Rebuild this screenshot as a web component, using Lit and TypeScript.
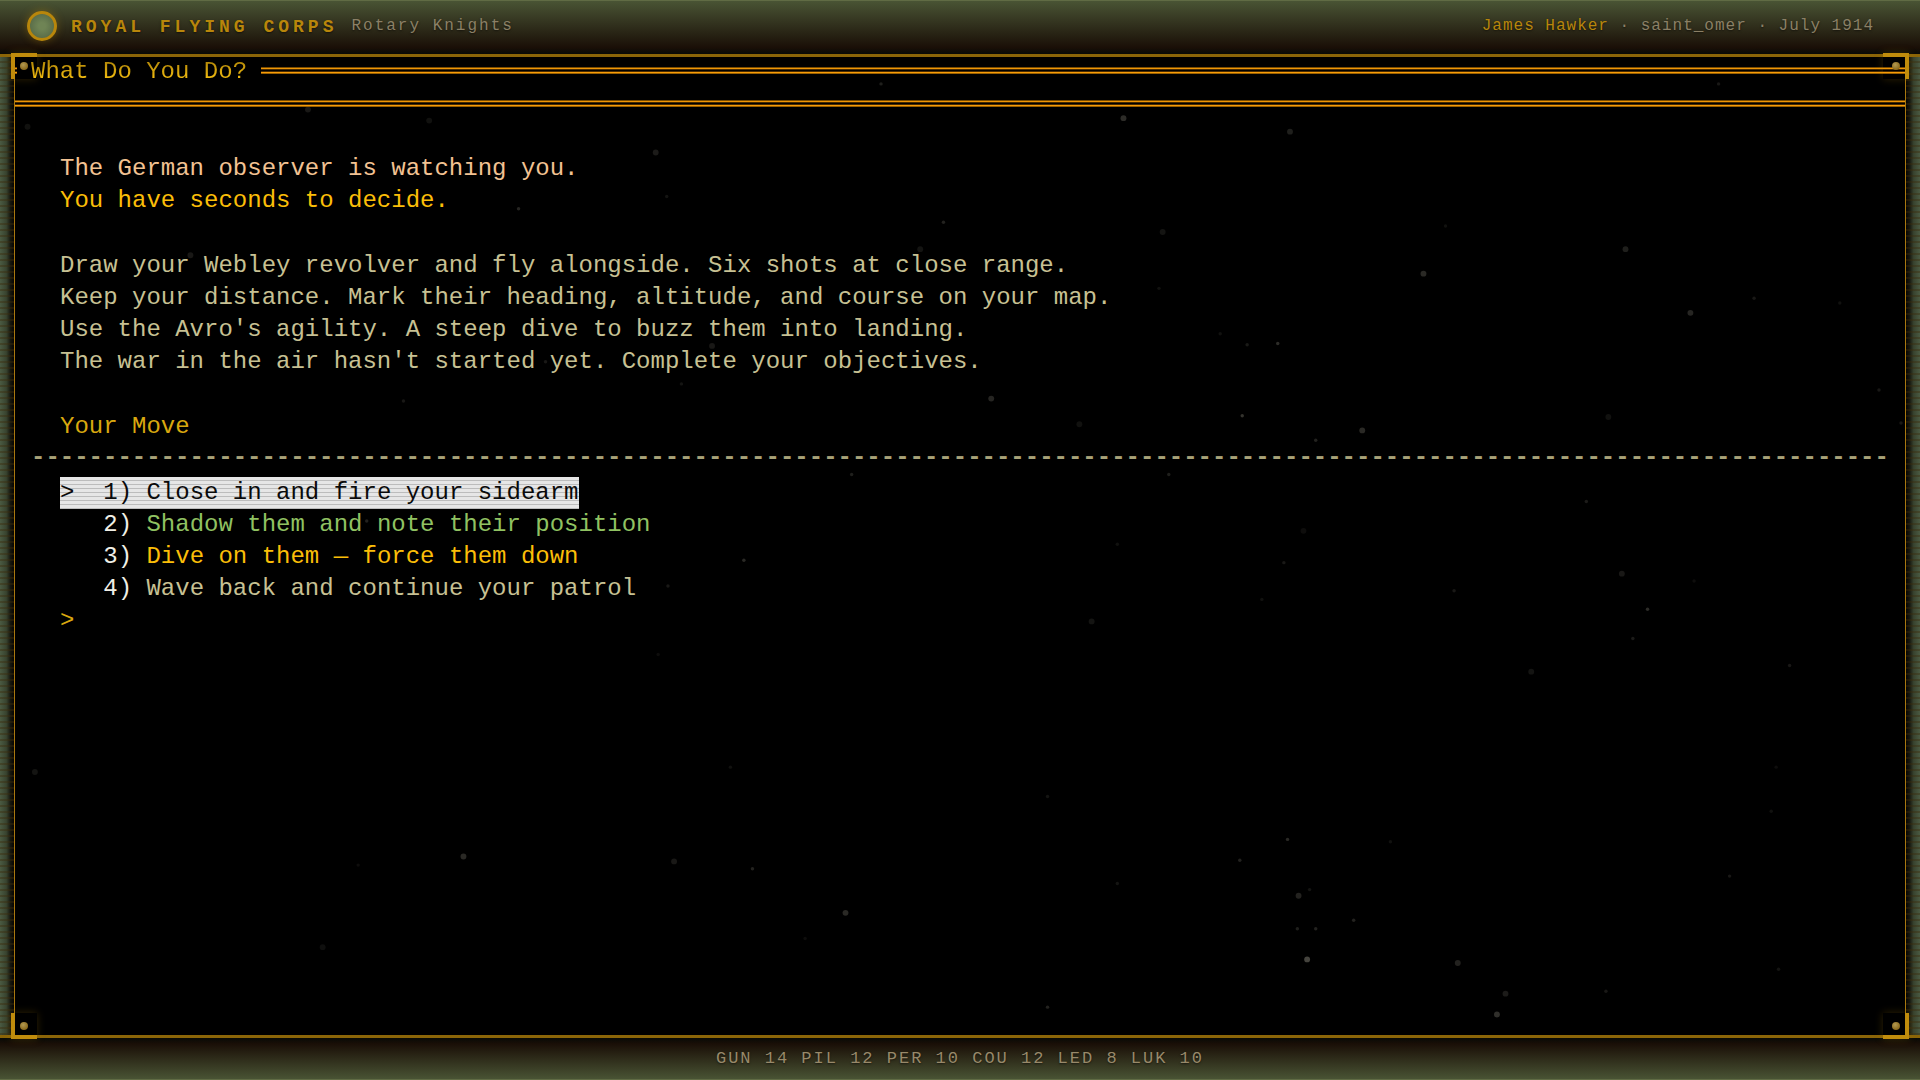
import { LitElement, html, css, svg } from "lit";
import { customElement, state } from "lit/decorators.js";
import { classMap } from "lit/directives/class-map.js";

interface Choice {
  label: string;
  tone: string;
}

const CHOICES: Choice[] = [
  { label: "Close in and fire your sidearm", tone: "plain" },
  { label: "Shadow them and note their position", tone: "safe" },
  { label: "Dive on them — force them down", tone: "gold" },
  { label: "Wave back and continue your patrol", tone: "plain" },
];

const STATS: [string, number][] = [
  ["GUN", 14],
  ["PIL", 12],
  ["PER", 10],
  ["COU", 12],
  ["LED", 8],
  ["LUK", 10],
];

// Dust motes: x, y, radius, opacity in a 1568 by 882 field.
const MOTES: [number, number, number, number][] = [
  [917, 96, 2, 0.26], [1053, 107, 2, 0.18], [1327, 203, 2, 0.18], [1162, 223, 2, 0.24],
  [1380, 255, 2, 0.22], [949, 189, 2, 0.12], [770, 181, 1, 0.2], [751, 203, 2, 0.12],
  [1043, 280, 1, 0.26], [1018, 281, 1, 0.15], [1014, 339, 1, 0.3], [1112, 351, 2, 0.24],
  [1074, 359, 1, 0.2], [809, 325, 2, 0.22], [881, 346, 2, 0.1], [535, 124, 2, 0.16],
  [423, 170, 1, 0.22], [544, 160, 1, 0.12], [350, 98, 2, 0.1], [251, 89, 2, 0.14],
  [22, 103, 2, 0.1], [155, 208, 2, 0.14], [329, 327, 1, 0.14], [719, 68, 1, 0.18],
  [1180, 184, 1, 0.1], [1432, 243, 1, 0.14], [1502, 247, 1, 0.1], [1534, 318, 1, 0.14],
  [1313, 340, 2, 0.1], [1552, 345, 1, 0.14], [1295, 409, 1, 0.16], [1064, 433, 2, 0.08],
  [1048, 459, 1, 0.14], [1324, 468, 2, 0.14], [1345, 497, 1, 0.26], [1333, 521, 1, 0.16],
  [1250, 548, 2, 0.12], [1187, 482, 1, 0.14], [1461, 543, 1, 0.14], [1030, 489, 1, 0.1],
  [891, 507, 2, 0.12], [607, 457, 1, 0.24], [545, 478, 1, 0.14], [695, 387, 1, 0.18],
  [954, 387, 1, 0.18], [299, 425, 1, 0.2], [28, 630, 2, 0.12], [378, 699, 2, 0.24],
  [550, 703, 2, 0.14], [614, 709, 1, 0.2], [690, 745, 2, 0.24], [292, 706, 1, 0.08],
  [263, 773, 2, 0.09], [596, 626, 1, 0.1], [855, 650, 1, 0.12], [912, 721, 1, 0.12],
  [1012, 702, 1, 0.2], [1051, 685, 1, 0.24], [1060, 731, 2, 0.2], [1069, 726, 1, 0.12],
  [1059, 758, 1, 0.18], [1074, 758, 1, 0.2], [1105, 751, 1, 0.2], [1067, 783, 2, 0.4],
  [1190, 786, 2, 0.2], [1229, 811, 2, 0.16], [1222, 828, 2, 0.28], [1135, 687, 1, 0.1],
  [1311, 809, 1, 0.14], [1412, 715, 1, 0.14], [1452, 791, 1, 0.12], [1446, 662, 1, 0.1],
  [855, 822, 1, 0.2], [1450, 626, 1, 0.08], [912, 444, 1, 0.1], [1403, 68, 1, 0.14],
  [996, 272, 1, 0.1], [581, 282, 2, 0.14], [445, 295, 1, 0.14], [556, 313, 1, 0.12],
  [946, 235, 1, 0.1], [537, 534, 1, 0.08], [1383, 474, 1, 0.08], [657, 766, 1, 0.08],
];

@customElement("app-root")
export class AppRoot extends LitElement {
  static styles = css`
    :host {
      display: block;
      position: relative;
      min-height: 100vh;
      overflow: hidden;
      background: #000;
      color: #c7c193;
      font-family: "Liberation Mono", monospace;
    }
    .shell {
      display: flex;
      flex-direction: column;
      min-height: 100vh;
    }
    .bar {
      display: flex;
      align-items: center;
      box-sizing: border-box;
      color: #8b8066;
      font-size: 16px;
      text-shadow: 0 1px 2px #0008;
    }
    .top {
      gap: 14px;
      height: 57px;
      padding: 0 46px 3px 27px;
      border-bottom: 3px solid #8b6508;
      background: linear-gradient(#4a5535, #1a0f07 88%, #080a06);
      box-shadow: inset 0 1px #606b44;
    }
    .seal {
      box-sizing: border-box;
      width: 30px;
      height: 30px;
      border: 3px solid #b8860b;
      border-radius: 50%;
      background: radial-gradient(circle, #6f8455 20%, #4f6142);
      box-shadow: 0 0 8px #b8860b66;
    }
    .brand {
      margin: 0;
      padding-top: 2px;
      color: #b8860b;
      font-size: 18px;
      font-weight: 700;
      letter-spacing: 4px;
    }
    .game {
      letter-spacing: 2px;
      flex: 1;
    }
    .status {
      letter-spacing: 1px;
    }
    .pilot {
      color: #b8860b;
    }
    .bottom {
      justify-content: center;
      height: 45px;
      padding-bottom: 1px;
      border-top: 3px solid #8b6508;
      background: linear-gradient(#080a06, #1a0f07 14%, #4a5535);
      box-shadow: inset 0 -1px #606b44;
      color: #98896a;
      font-size: 17px;
      letter-spacing: 2px;
    }
    .stage {
      position: relative;
      display: flex;
      flex: 1;
    }
    .rail {
      width: 14px;
      background:
        repeating-linear-gradient(#0000 0 4px, #3b2a0a66 4px 6px),
        linear-gradient(90deg, #4a5a42, #38432f 45%, #15160e 75%, #050402);
    }
    .rail.right {
      background:
        repeating-linear-gradient(#0000 0 4px, #3b2a0a66 4px 6px),
        linear-gradient(270deg, #4a5a42, #38432f 45%, #15160e 75%, #050402);
    }
    .terminal {
      flex: 1;
      min-width: 0;
      border: solid #a8780f;
      border-width: 0 1px;
      font-size: 24px;
      line-height: 32px;
    }
    .title {
      display: flex;
      align-items: center;
      gap: 14px;
      height: 28px;
    }
    .title h2 {
      margin: 0;
      padding-top: 2px;
      font: inherit;
      color: transparent;
      background: linear-gradient(#b08608 20%, #f0ba10 70%);
      background-clip: text;
    }
    .double {
      flex: 1;
      box-sizing: border-box;
      height: 8px;
      background: linear-gradient(
        #7a4c00 0 1px, #ee9606 1px 2px, #4a2c00 2px 3px, #000 3px 4px,
        #4a2c00 4px 5px, #f79c08 5px 6px, #9a6000 6px 7px, #000 7px 8px
      );
    }
    .stub {
      flex: none;
      width: 2px;
    }
    .rule {
      display: flex;
      align-items: center;
      height: 38px;
    }
    .scene {
      display: flex;
      flex-direction: column;
      gap: 33px;
      padding: 30px 16px;
    }
    .scene p {
      margin: 0;
      padding: 0 29px;
    }
    .peach {
      color: #f2c292;
    }
    .gold {
      color: #fbbe08;
    }
    .safe {
      color: #90c262;
    }
    .plain {
      color: #c7c193;
    }
    .heading {
      margin: 0;
      padding: 0 29px;
      font: inherit;
      color: #d9a80f;
    }
    .dashes {
      overflow: hidden;
      height: 34px;
      color: #a8a278;
      font-weight: 700;
      line-height: 30px;
      white-space: nowrap;
    }
    .choices {
      margin: 0;
      padding: 0 29px;
      list-style: none;
    }
    .choice {
      display: block;
      padding: 0;
      border: 0;
      background: none;
      color: #f0efe6;
      font: inherit;
      white-space: pre;
      cursor: pointer;
    }
    .choice.on,
    .choice.on .plain {
      color: #0a0a0a;
    }
    .choice.on {
      background: repeating-linear-gradient(#e6e6e6 0 3px, #bcbcbc 3px 4px);
    }
    .prompt {
      display: flex;
      padding: 0 29px;
      color: #d9a80f;
    }
    .entry {
      flex: 1;
      min-width: 0;
      height: 32px;
      padding: 0 0 0 14px;
      box-sizing: border-box;
      border: 0;
      outline: 0;
      background: none;
      color: inherit;
      font: inherit;
    }
    .motes {
      position: absolute;
      inset: 0;
      width: 100%;
      height: 100%;
      pointer-events: none;
    }
    .corner {
      position: absolute;
      box-sizing: border-box;
      display: grid;
      place-items: center;
      width: 26px;
      height: 26px;
      box-shadow: 0 0 8px #b8860b40;
      pointer-events: none;
    }
    .corner::before {
      content: "";
      grid-area: 1 / 1;
      place-self: stretch;
      border: 0 solid #c08c0c;
    }
    .corner::after {
      content: "";
      grid-area: 1 / 1;
      width: 8px;
      height: 8px;
      border-radius: 50%;
      background: radial-gradient(circle at 40% 35%, #b39a52, #8b6a1c 70%, #5c4410);
    }
    .nw, .ne { top: -4px; }
    .sw, .se { bottom: -4px; }
    .nw, .sw { left: 11px; }
    .ne, .se { right: 11px; }
    .nw::before, .ne::before { border-top-width: 4px; }
    .sw::before, .se::before { border-bottom-width: 4px; }
    .nw::before, .sw::before { border-left-width: 4px; }
    .ne::before, .se::before { border-right-width: 4px; }
  `;

  @state() private selected = 0;

  render() {
    return html`
      <div class="shell">
        <header class="bar top">
          <span class="seal"></span>
          <h1 class="brand">ROYAL FLYING CORPS</h1>
          <span class="game">Rotary Knights</span>
          <span class="status"><span class="pilot">James Hawker</span> · saint_omer · July 1914</span>
        </header>
        <main class="stage">
          <div class="rail"></div>
          <section class="terminal">
            <div class="title">
              <div class="double stub"></div>
              <h2>What Do You Do?</h2>
              <div class="double"></div>
            </div>
            <div class="rule"><div class="double"></div></div>
            <div class="scene">
              <p>
                <span class="peach">The German observer is watching you.</span><br />
                <span class="gold">You have seconds to decide.</span>
              </p>
              <p>
                Draw your Webley revolver and fly alongside. Six shots at close range.<br />
                Keep your distance. Mark their heading, altitude, and course on your map.<br />
                Use the Avro's agility. A steep dive to buzz them into landing.<br />
                The war in the air hasn't started yet. Complete your objectives.
              </p>
              <div>
                <h3 class="heading">Your Move</h3>
                <div class="dashes">${"-".repeat(129)}</div>
                <ul class="choices">
                  ${CHOICES.map(
                    (choice, i) => html`<li>
                      <button
                        class=${classMap({ choice: true, on: i === this.selected })}
                        @click=${() => (this.selected = i)}
                      >${i === this.selected ? ">" : " "}  ${i + 1}) <span class=${choice.tone}>${choice.label}</span></button>
                    </li>`
                  )}
                </ul>
                <div class="prompt">
                  <label for="entry">&gt;</label>
                  <input class="entry" id="entry" type="text" autocomplete="off" />
                </div>
              </div>
            </div>
          </section>
          <div class="rail right"></div>
          <i class="corner nw"></i><i class="corner ne"></i>
          <i class="corner sw"></i><i class="corner se"></i>
        </main>
        <footer class="bar bottom">${STATS.map(([k, v]) => `${k} ${v}`).join(" ")}</footer>
      </div>
      <svg class="motes" viewBox="0 0 1568 882" preserveAspectRatio="none" aria-hidden="true">
        ${MOTES.map(
          ([x, y, r, o]) => svg`<circle cx=${x + 0.5} cy=${y + 0.5} r=${r + 0.4} fill="#d8d4c0" opacity=${o * 0.8}></circle>`
        )}
      </svg>
    `;
  }
}
